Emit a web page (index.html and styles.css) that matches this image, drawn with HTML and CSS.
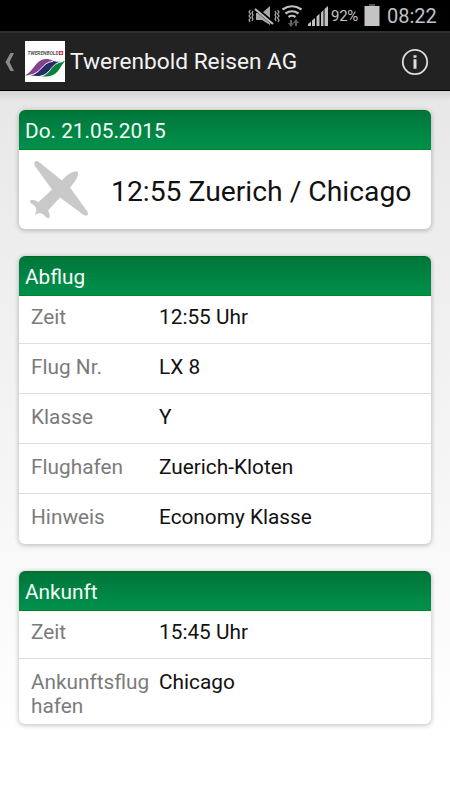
FILE: index.html
```html
<!DOCTYPE html>
<html lang="de">
<head>
<meta charset="utf-8">
<title>Twerenbold Reisen AG</title>
<link rel="stylesheet" href="styles.css">
</head>
<body>
<div class="status">
  <svg class="status-icons" width="84" height="30" viewBox="0 0 84 30">
    <g fill="none" stroke="#b0b0b0" stroke-width="1.200">
      <path d="M2.500 9l-1.500 2 1.500 2-1.500 2 1.500 2-1.500 2 1 2M5 10l-1 2 1 2-1 2 1 2-1 2"/>
      <path d="M27 10l1 2-1 2 1 2-1 2 1 2M29.500 9l1.500 2-1.500 2 1.500 2-1.500 2 1.500 2-1 2"/>
    </g>
    <path fill="#a8a8a8" d="M8 12h6l8-7v19l-8-5H8z"/>
    <path stroke="#000" stroke-width="4" d="M8 8l17 14"/>
    <path stroke="#c0c0c0" stroke-width="2" d="M7 8l18 15"/>
    <g fill="none" stroke="#c0c0c0" stroke-width="2.200">
      <path d="M34.500 8.500q9.500-6.500 19 0M37.500 12.500q6.500-4.500 13 0M40.500 16q3.500-2.500 7 0"/>
    </g>
    <path fill="#606060" d="M42 19h2v3h2l-3 4-3-4h2zM49 25h-2v-3h-2l3-4 3 4h-2z"/>
    <path fill="#c0c0c0" d="M60 25v-2l3-2.500V25zM64 25v-5.500l3-2.500v8zM68.500 25v-9.500l3-2.700V25zM73 25V11.500l2.500-2.400V25zM76.500 25V8L80 5v20z"/>
  </svg>
  <span class="percent">92%</span>
  <svg class="battery" width="16" height="24" viewBox="0 0 16 24"><path fill="#555" d="M5 1h6v3H5z"/><path fill="#c4c4c4" d="M.5 3h15v20H.5z"/></svg>
  <span class="clock">08:22</span>
</div>
<header class="bar">
  <svg class="back" width="12" height="22" viewBox="0 0 12 22"><path fill="#8b8b8b" d="M7.500 2H11L6.500 11l4.500 9H7.500L2.500 11z"/></svg>
  <svg class="logo" width="40" height="41" viewBox="0 0 40 41">
    <path fill="#fff" d="M0 0h40v41H0z"/>
    <text class="logo-text" x="2.500" y="13.500" textLength="31" lengthAdjust="spacingAndGlyphs">TWERENBOLD</text>
    <path fill="#e3141b" d="M34 10h4v4h-4z"/><path stroke="#fff" d="M36 10.600v2.800M34.600 12h2.800"/>
    <path fill="#86418c" d="M0 34.500C9 30 11 18 21 18c6 0 7 3 11 2.500C22 22 18 34 0 34.500z"/>
    <path fill="#252c66" d="M5 34.500C18 32 18 21.500 27 20.500c4-.3 6 .8 9.500 0C27 23 26 34 17 34.700c-5 .5-8 0-12-.2z"/>
    <path fill="#078038" d="M16 35.500C28 33 25 22 40 20c-5 5-6 13-15 15-3 .7-6 .7-9 .5z"/>
    <path fill="none" stroke="#fff" stroke-width=".9" d="M3 34.800C18 32 16 21.500 28 20.300M15 35.300C27 33 25 22 38 20.500"/>
  </svg>
  <h1 class="title">Twerenbold Reisen AG</h1>
  <svg class="info" width="28" height="28" viewBox="0 0 28 28"><circle cx="14" cy="14" r="12.200" fill="none" stroke="#ddd" stroke-width="1.800"/><path fill="#ddd" d="M12.500 7.200h3v2.600h-3zM12.500 11.200h3v9.600h-3z"/></svg>
</header>
<main class="content">
  <section class="card">
    <h2 class="head date">Do. 21.05.2015</h2>
    <div class="flight">
      <svg class="plane" width="60" height="60" viewBox="0 0 60 60"><path fill="#c9c9c9" d="M6 1.500Q8 .3 10 2L33 20.500Q38 14 44 12Q50 9.500 49 15Q47 21 41 27.500L58 51Q60 54 58 55.500Q56 56 54 54.500L31 37.500L19 50.500Q21.500 55 20.500 57.500Q19 60 14.500 54.500L11 53L6 54.500L7.500 49.500L6 46Q.5 43 1 40.500Q3 38.500 9.500 42L23 29.500L6 6Q4.500 3 6 1.500z"/></svg>
      <span class="route">12:55 Zuerich / Chicago</span>
    </div>
  </section>
  <section class="card">
    <h2 class="head">Abflug</h2>
    <dl class="rows">
      <div class="row"><dt>Zeit</dt><dd>12:55 Uhr</dd></div>
      <div class="row"><dt>Flug Nr.</dt><dd>LX 8</dd></div>
      <div class="row"><dt>Klasse</dt><dd>Y</dd></div>
      <div class="row"><dt>Flughafen</dt><dd>Zuerich-Kloten</dd></div>
      <div class="row"><dt>Hinweis</dt><dd>Economy Klasse</dd></div>
    </dl>
  </section>
  <section class="card">
    <h2 class="head">Ankunft</h2>
    <dl class="rows">
      <div class="row"><dt>Zeit</dt><dd>15:45 Uhr</dd></div>
      <div class="row"><dt>Ankunftsflug<br>hafen</dt><dd>Chicago</dd></div>
    </dl>
  </section>
</main>
</body>
</html>
```
FILE: styles.css
```css
* { box-sizing: border-box; }
body {
  margin: 0;
  width: 450px;
  height: 800px;
  overflow: hidden;
  font-family: Roboto, sans-serif;
  background: #fff;
}
.status {
  display: flex;
  align-items: center;
  height: 31px;
  padding-left: 248px;
  background: #000;
  color: #c2c2c2;
}
.status-icons { flex: none; }
.percent { width: 33px; margin-left: -1px; font-size: 15px; letter-spacing: -.3px; }
.battery { flex: none; margin-top: -1px; }
.clock { margin-left: 7px; font-size: 20px; line-height: 30px; }
.bar {
  display: flex;
  align-items: center;
  height: 60px;
  padding: 0 21px 0 3px;
  background: #222;
  border-top: 2px solid #303030;
  border-bottom: 1px solid #000;
}
.back { margin-right: 10px; }
.logo { flex: none; }
.logo-text { font: italic bold 4.5px Roboto, sans-serif; fill: #555; }
.title { flex: 1; margin: 0 0 0 5px; font-size: 22.7px; font-weight: 400; color: #f3f3f3; }
.content {
  height: 709px;
  padding: 19px 19px 0;
  background: linear-gradient(#d4d4d4, #e7e7e7 10px, #eaeaea 60px, #fff 650px);
}
.card {
  margin-bottom: 27px;
  border-radius: 6px;
  overflow: hidden;
  background: #fff;
  box-shadow: 0 1px 4px 1px rgba(0, 0, 0, .2);
}
.head {
  height: 40px;
  margin: 0;
  padding-left: 6px;
  font-size: 20.8px;
  font-weight: 400;
  line-height: 40px;
  color: #f5fff8;
  background: linear-gradient(#00753a, #00914c);
  border-top: 1px solid #006c1c;
  border-bottom: 1px solid #008525;
}
.flight { display: flex; align-items: center; height: 79px; padding-left: 10px; }
.plane { flex: none; }
.route { margin: 3px 0 0 22px; font-size: 28.3px; white-space: nowrap; color: #111; }
.rows { margin: 0; }
.row {
  display: flex;
  min-height: 50px;
  padding: 11px 0 0 12px;
  border-bottom: 1px solid #dedede;
  font-size: 20.8px;
  line-height: 24px;
}
.row:first-child { min-height: 48px; padding-top: 9px; }
.row:last-child { border-bottom: 0; padding-bottom: 6px; }
.row dt { width: 128px; color: #7b7b7b; }
.row dd { margin: 0; color: #111; }
```
